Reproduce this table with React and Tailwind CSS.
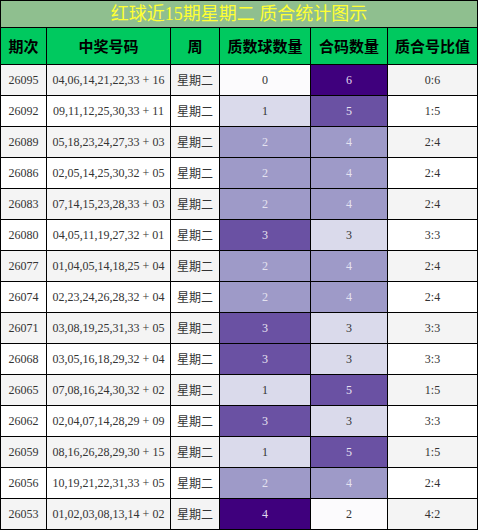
import React from 'react';

const rows = [
  ['26095', '04,06,14,21,22,33 + 16', 0, 6],
  ['26092', '09,11,12,25,30,33 + 11', 1, 5],
  ['26089', '05,18,23,24,27,33 + 03', 2, 4],
  ['26086', '02,05,14,25,30,32 + 05', 2, 4],
  ['26083', '07,14,15,23,28,33 + 03', 2, 4],
  ['26080', '04,05,11,19,27,32 + 01', 3, 3],
  ['26077', '01,04,05,14,18,25 + 04', 2, 4],
  ['26074', '02,23,24,26,28,32 + 04', 2, 4],
  ['26071', '03,08,19,25,31,33 + 05', 3, 3],
  ['26068', '03,05,16,18,29,32 + 04', 3, 3],
  ['26065', '07,08,16,24,30,32 + 02', 1, 5],
  ['26062', '02,04,07,14,28,29 + 09', 3, 3],
  ['26059', '08,16,26,28,29,30 + 15', 1, 5],
  ['26056', '10,19,21,22,31,33 + 05', 2, 4],
  ['26053', '01,02,03,08,13,14 + 02', 4, 2],
];

// purple scale, lightest -> darkest
const shades = [
  'bg-[#fcfbfd] text-[#333]',
  'bg-[#dadaeb] text-[#333]',
  'bg-[#9e9ac8] text-[#e4e2f0]',
  'bg-[#6a51a3] text-[#e8e4f2]',
  'bg-[#3f007d] text-[#e0d8ee]',
];

const cols = 'grid grid-cols-[46px_124px_49px_91px_77px_90px]';
const cell = 'flex items-center justify-center border-r border-b border-black';

export default function App() {
  return (
    <div className="w-[478px] bg-white" style={{ fontFamily: '"Liberation Serif", "Noto Sans CJK SC", serif' }}>
      <div className="h-[28px] bg-[#8fbf8f] border border-black flex items-center justify-center text-[18px] text-[#ffff33] leading-none">
        红球近15期星期二 质合统计图示
      </div>
      <div className="border-l border-black">
        <div className={`${cols} h-[37px] bg-[#00c95f] text-black text-[15px] font-bold`} style={{ fontFamily: '"Noto Sans CJK SC", sans-serif' }}>
          {['期次', '中奖号码', '周', '质数球数量', '合码数量', '质合号比值'].map((h) => (
            <div key={h} className={cell}>{h}</div>
          ))}
        </div>
        {rows.map(([no, nums, p, c], i) => {
          const bg = i % 2 === 0 ? 'bg-[#f4f4f4]' : 'bg-white';
          return (
            <div key={no} className={`${cols} h-[31px] text-[12px] text-[#333]`}>
              <div className={`${cell} ${bg}`}>{no}</div>
              <div className={`${cell} ${bg}`}>{nums}</div>
              <div className={`${cell} ${bg} text-[12px]`} style={{ fontFamily: '"Noto Sans CJK SC", sans-serif' }}>星期二</div>
              <div className={`${cell} ${shades[p]}`}>{p}</div>
              <div className={`${cell} ${shades[c - 2]}`}>{c}</div>
              <div className={`${cell} ${bg}`}>{p}:{c}</div>
            </div>
          );
        })}
      </div>
    </div>
  );
}
